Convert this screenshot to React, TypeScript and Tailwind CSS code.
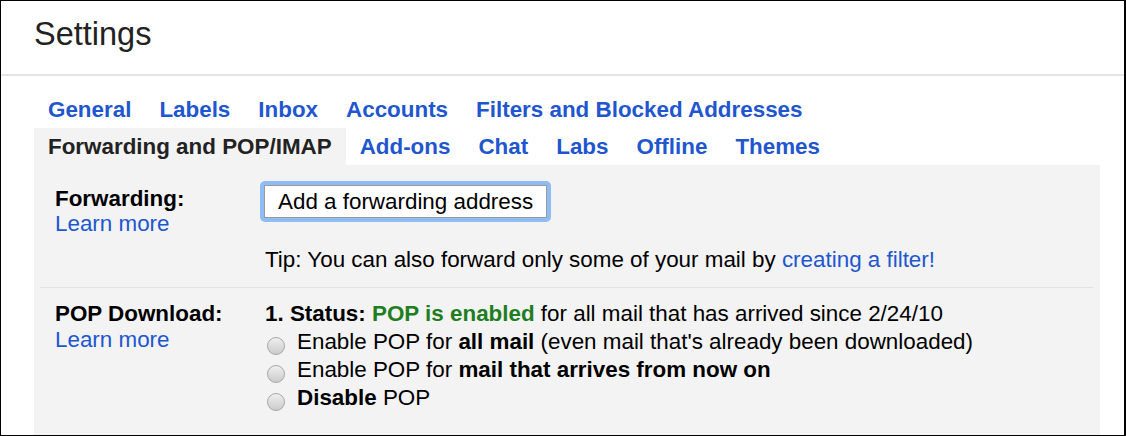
const tabsTop = ['General', 'Labels', 'Inbox', 'Accounts', 'Filters and Blocked Addresses']
const tabsBottom = ['Add-ons', 'Chat', 'Labs', 'Offline', 'Themes']

function Tab({ label, active }: { label: string; active?: boolean }) {
  return (
    <span
      className={`flex h-[37px] items-center px-[14px] text-[22.4px] font-bold ${
        active ? 'bg-[#f3f3f3] text-[#222]' : 'text-[#2156cf]'
      }`}
    >
      {label}
    </span>
  )
}

function Radio({ children }: { children: React.ReactNode }) {
  return (
    <div className="flex h-[28px] items-center">
      <span className="ml-[2px] mt-[7px] h-[18px] w-[18px] shrink-0 rounded-full border border-[#a8a8a8] bg-linear-to-b from-[#efefef] to-[#cbcbcb]" />
      <span className="ml-[12px]">{children}</span>
    </div>
  )
}

export default function App() {
  return (
    <div className="h-[436px] w-[1126px] overflow-hidden border border-r-2 border-black bg-white font-['Liberation_Sans',Arial,sans-serif] text-black">
      <header className="h-[73px] pl-[33px] pt-[15px] text-[32.5px] leading-[36px] text-[#222]">Settings</header>
      <div className="h-[2px] bg-[#e5e5e5]" />

      <div className="pl-[33px] pt-[15px]">
        <nav className="flex">
          {tabsTop.map((t) => (
            <Tab key={t} label={t} />
          ))}
        </nav>
        <nav className="flex">
          <Tab label="Forwarding and POP/IMAP" active />
          {tabsBottom.map((t) => (
            <Tab key={t} label={t} />
          ))}
        </nav>

        <section className="h-[271px] w-[1066px] bg-[#f3f3f3] text-[22.4px] leading-[25px]">
          {/* forwarding */}
          <div className="flex pt-[16px]">
            <div className="w-[231px] shrink-0 pl-[21px] pt-[5px]">
              <div className="font-bold">Forwarding:</div>
              <a className="text-[#2156cf]">Learn more</a>
            </div>
            <div>
              <span className="-ml-[5px] inline-block rounded-[5px] bg-[#8fbdf3] p-[4px]">
                <button className="flex h-[33px] items-center border border-[#9a9a9a] bg-white px-[13px] text-black">
                  Add a forwarding address
                </button>
              </span>
              <p className="mt-[25px]">
                Tip: You can also forward only some of your mail by{' '}
                <a className="text-[#2156cf]">creating a filter!</a>
              </p>
            </div>
          </div>

          <div className="mx-[6px] mt-[15px] h-px w-[1053px] bg-[#e2e2e2]" />

          {/* pop download */}
          <div className="flex pt-[13px]">
            <div className="w-[231px] shrink-0 pl-[21px] leading-[26px]">
              <div className="font-bold">POP Download:</div>
              <a className="text-[#2156cf]">Learn more</a>
            </div>
            <div className="leading-[28px]">
              <div className="-mt-[1px]">
                <b>1. Status: </b>
                <b className="text-[#1f7d22]">POP is enabled</b> for all mail that has arrived since 2/24/10
              </div>
              <Radio>
                Enable POP for <b>all mail</b> (even mail that's already been downloaded)
              </Radio>
              <Radio>
                Enable POP for <b>mail that arrives from now on</b>
              </Radio>
              <Radio>
                <b>Disable</b> POP
              </Radio>
            </div>
          </div>
        </section>
      </div>
    </div>
  )
}
